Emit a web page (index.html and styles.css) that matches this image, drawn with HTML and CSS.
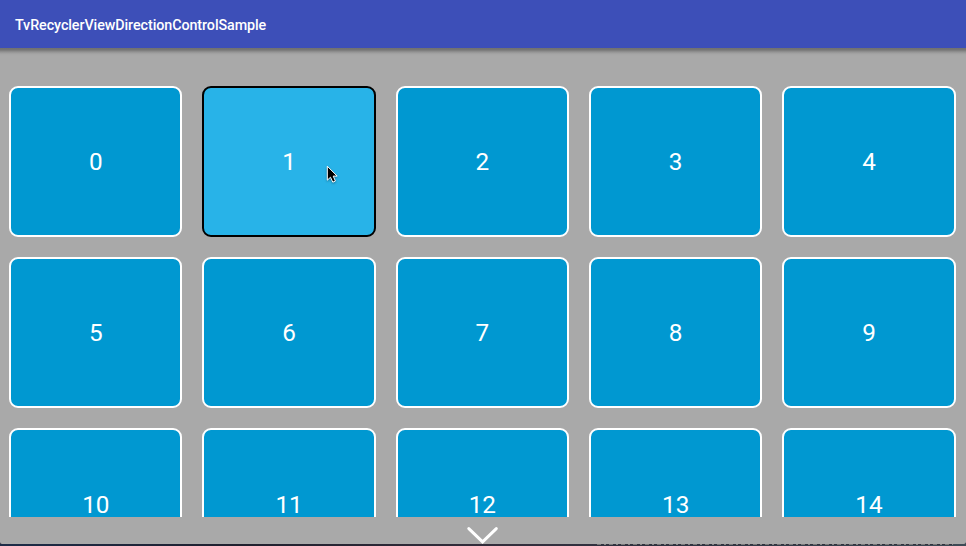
FILE: index.html
```html
<!DOCTYPE html>
<html lang="en">
<head>
<meta charset="utf-8">
<title>TvRecyclerViewDirectionControlSample</title>
<link rel="stylesheet" href="styles.css">
</head>
<body>
<div class="app">
  <header class="toolbar"><h1>TvRecyclerViewDirectionControlSample</h1></header>
  <main class="viewport">
    <div class="grid">
      <div class="card">0</div>
      <div class="card focused">1
        <svg class="cursor" width="14" height="20" viewBox="0 0 14 20"><path d="M1.3 1.2V15.2L4.5 12.2L6.8 17.2L9.4 16L7.2 11.1H11.2Z" fill="#000" stroke="#fff" stroke-width="1"/></svg>
      </div>
      <div class="card">2</div>
      <div class="card">3</div>
      <div class="card">4</div>
      <div class="card">5</div>
      <div class="card">6</div>
      <div class="card">7</div>
      <div class="card">8</div>
      <div class="card">9</div>
      <div class="card">10</div>
      <div class="card">11</div>
      <div class="card">12</div>
      <div class="card">13</div>
      <div class="card">14</div>
    </div>
  </main>
  <footer class="more">
    <svg width="34" height="20" viewBox="0 0 34 20"><path d="M3.8 3.6L17.6 16.8L31.3 3.6" fill="none" stroke="#fff" stroke-width="3" stroke-linecap="round"/></svg>
  </footer>
</div>
<div class="desktop"><div class="specks"></div></div>
</body>
</html>
```
FILE: styles.css
```css
* { box-sizing: border-box; }

body {
  margin: 0;
  width: 966px;
  height: 546px;
  overflow: hidden;
  display: flex;
  flex-direction: column;
  background: #242638;
  font-family: Roboto, "Liberation Sans", sans-serif;
  color: #fff;
}

.app {
  height: 544px;
  display: flex;
  flex-direction: column;
  background: #a9a9a9;
  border-radius: 0 0 2px 2px;
  overflow: hidden;
}

.toolbar {
  flex: none;
  height: 48px;
  padding: 1px 0 0 15px;
  display: flex;
  align-items: center;
  background: #3d4fb8;
}

.toolbar h1 {
  margin: 0;
  font-size: 14.3px;
  font-weight: 500;
  line-height: 20px;
  letter-spacing: -0.07px;
}

.viewport {
  flex: none;
  height: 469px;
  padding: 37.6px 10px 0 9.15px;
  overflow: hidden;
  background: linear-gradient(#707070, #777 2px, #939393 4px, #a5a5a5 6px, #a9a9a9 8px);
}

.grid {
  display: grid;
  grid-template-columns: repeat(5, 173.3px);
  grid-auto-rows: 151.2px;
  column-gap: 20px;
  row-gap: 20.2px;
}

.card {
  position: relative;
  display: flex;
  align-items: center;
  justify-content: center;
  padding-top: 1.4px;
  border: 2px solid #fff;
  border-radius: 9px;
  background: #0098d1;
  font-size: 24.3px;
  line-height: 24px;
}

.focused {
  border-color: #000;
  background: #28b3e8;
}

.cursor {
  position: absolute;
  left: 122px;
  top: 77px;
  filter: drop-shadow(0 1px 1px rgba(0, 0, 0, .35));
}

.more {
  flex: none;
  height: 27px;
  padding: 8px 0 0 465px;
}

.more svg { display: block; }

.desktop {
  flex: none;
  height: 2px;
  padding-left: 597px;
  background: linear-gradient(90deg, #1d2c48, #20202e 25%, #332d3b 50%, #303442 70%, #3e4b56);
}

.specks {
  height: 1px;
  width: 356px;
  background: repeating-linear-gradient(90deg, #777 0 4px, #30323d 4px 7px, #858585 7px 9px, #30323d 9px 12px);
}
```
